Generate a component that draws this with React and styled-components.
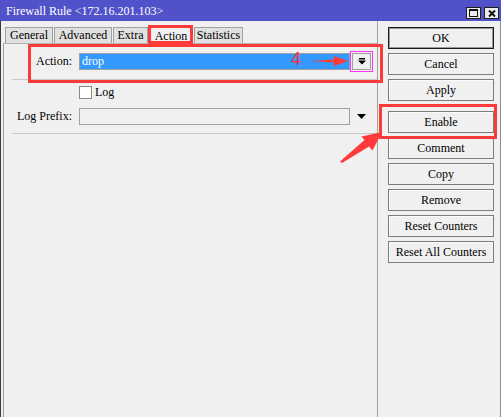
import React from 'react';
import styled, { createGlobalStyle } from 'styled-components';

const GlobalStyle = createGlobalStyle`
  html, body {
    margin: 0;
    padding: 0;
    background: #f0f0f0;
  }
  body {
    font-family: 'Liberation Serif', 'Times New Roman', serif;
    font-size: 12px;
    color: #000;
  }
`;

const Window = styled.div`
  position: relative;
  width: 501px;
  height: 417px;
  display: flex;
  flex-direction: column;
  background: #f0f0f0;
  overflow: hidden;
`;

const TitleBar = styled.div`
  height: 21px;
  flex-shrink: 0;
  display: flex;
  align-items: center;
  justify-content: space-between;
  padding: 0 2px 0 6px;
  background: #5151c9;
  color: #ffffff;
`;

const Title = styled.span`
  font-size: 12px;
  line-height: 1;
  margin-top: 1px;
`;

const WindowButtons = styled.div`
  display: flex;
  gap: 3px;
  margin-top: 5px;
`;

const WinButton = styled.div`
  width: 15px;
  height: 12px;
  box-sizing: border-box;
  border: 1px solid #1e1e1e;
  background: #ececec;
  display: flex;
  align-items: center;
  justify-content: center;
`;

const Body = styled.div`
  flex: 1;
  display: flex;
  border-left: 1px solid #3a3a3a;
  border-right: 1px solid #8c8c8c;
`;

const LeftPane = styled.div`
  width: 376px;
  display: flex;
  flex-direction: column;
  padding-left: 2px;
  box-sizing: border-box;
`;

const TabBar = styled.div`
  display: flex;
  align-items: flex-end;
  gap: 1px;
  margin: 5px 0 0 2px;
  height: 17px;
`;

const Tab = styled.div`
  width: ${p => p.w}px;
  height: ${p => (p.active ? 17 : 16)}px;
  box-sizing: border-box;
  display: flex;
  align-items: center;
  justify-content: center;
  border: 1px solid #a0a0a0;
  border-bottom: none;
  background: ${p => (p.active ? '#f0f0f0' : '#e1e1e1')};
  margin-bottom: ${p => (p.active ? -1 : 0)}px;
  position: relative;
  white-space: nowrap;
`;

const TabPanel = styled.div`
  flex: 1;
  border-left: 1px solid #a0a0a0;
  border-top: 1px solid #b4b4b4;
`;

const Section = styled.div`
  margin-left: 8px;
  padding: ${p => p.pad};
  border-bottom: 1px solid #c8c8c8;
  display: flex;
  flex-direction: column;
  gap: 9px;
`;

const Row = styled.div`
  display: flex;
  align-items: center;
  height: ${p => p.h || 17}px;
  margin-right: 6px;
`;

const Label = styled.div`
  width: 60px;
  margin-right: 7px;
  text-align: right;
  white-space: nowrap;
`;

const Field = styled.div`
  flex: 1;
  height: 17px;
  box-sizing: border-box;
  border: 1px solid #a0a0a0;
  background: ${p => (p.selected ? '#3399ff' : '#f0f0f0')};
  color: #fff;
  padding-left: 2px;
  display: flex;
  align-items: center;
`;

const DropButton = styled.div`
  width: 19px;
  height: 17px;
  margin-left: 2px;
  box-sizing: border-box;
  border: 1px solid #a0a0a0;
  background: #f0f0f0;
  display: flex;
  align-items: center;
  justify-content: center;
  outline: ${p => (p.marked ? '1.5px solid #ff33ff' : 'none')};
  outline-offset: 1px;
`;

const DropSlot = styled.div`
  width: 20px;
  margin-left: 1px;
  display: flex;
  justify-content: center;
`;

const CheckBox = styled.div`
  width: 13px;
  height: 13px;
  box-sizing: border-box;
  margin-left: 67px;
  border: 1px solid #8a8a8a;
  background: #ffffff;
`;

const CheckLabel = styled.span`
  margin-left: 3px;
`;

const RightPane = styled.div`
  flex: 1;
  border-left: 1px solid #a0a0a0;
  padding: 6px 0 0 10px;
  display: flex;
  flex-direction: column;
  gap: 4px;
`;

const Button = styled.div`
  width: 106px;
  height: 22px;
  box-sizing: border-box;
  margin-top: ${p => (p.spaced ? 6 : 0)}px;
  border: 1px solid ${p => (p.primary ? '#1a1a1a' : '#7c7c7c')};
  box-shadow: ${p => (p.primary ? 'inset 0 0 0 1px #9a9a9a' : 'inset 1px 1px 0 #fbfbfb')};
  background: #f0f0f0;
  display: flex;
  align-items: center;
  justify-content: center;
  white-space: nowrap;
`;

const Overlay = styled.div`
  position: absolute;
  inset: 0;
  pointer-events: none;
`;

const MarkBox = styled.div`
  position: absolute;
  box-sizing: border-box;
  border: 3px solid #fd3a3a;
`;

const StepNumber = styled.span`
  position: absolute;
  left: 291px;
  top: 50px;
  font-family: 'Liberation Sans', Arial, sans-serif;
  font-size: 18px;
  font-weight: 400;
  line-height: 1;
  color: #ff3030;
`;

const ArrowLayer = styled.svg`
  position: absolute;
  left: 0;
  top: 0;
`;

const MaximizeIcon = () => (
  <svg width="9" height="8" viewBox="0 0 9 8">
    <rect x="0.5" y="0.5" width="8" height="7" fill="none" stroke="#111" />
    <rect x="0" y="0" width="9" height="2" fill="#111" />
  </svg>
);

const CloseIcon = () => (
  <svg width="8" height="7" viewBox="0 0 8 7">
    <path d="M1 0.5 L7 6.5 M7 0.5 L1 6.5" stroke="#111" strokeWidth="2" />
  </svg>
);

const DropIcon = () => (
  <svg width="8" height="7" viewBox="0 0 8 7">
    <rect x="1" y="0" width="6" height="1.5" fill="#000" />
    <path d="M0 2.5 H8 L4 6.5 Z" fill="#000" />
  </svg>
);

const DownTriangle = () => (
  <svg width="9" height="5" viewBox="0 0 9 5">
    <path d="M0 0 H9 L4.5 5 Z" fill="#000" />
  </svg>
);

const actions = [
  { label: 'OK', primary: true },
  { label: 'Cancel' },
  { label: 'Apply' },
  { label: 'Enable', spaced: true },
  { label: 'Comment' },
  { label: 'Copy' },
  { label: 'Remove' },
  { label: 'Reset Counters' },
  { label: 'Reset All Counters' },
];

const tabs = [
  { label: 'General', w: 48 },
  { label: 'Advanced', w: 58 },
  { label: 'Extra', w: 35 },
  { label: 'Action', w: 44, active: true },
  { label: 'Statistics', w: 49 },
];

export default function App() {
  return (
    <>
      <GlobalStyle />
      <Window>
        <TitleBar>
          <Title>Firewall Rule &lt;172.16.201.103&gt;</Title>
          <WindowButtons>
            <WinButton><MaximizeIcon /></WinButton>
            <WinButton><CloseIcon /></WinButton>
          </WindowButtons>
        </TitleBar>
        <Body>
          <LeftPane>
            <TabBar>
              {tabs.map(t => (
                <Tab key={t.label} w={t.w} active={t.active}>{t.label}</Tab>
              ))}
            </TabBar>
            <TabPanel>
              <Section pad="9px 0 9px 0">
                <Row>
                  <Label>Action:</Label>
                  <Field selected>drop</Field>
                  <DropButton marked><DropIcon /></DropButton>
                </Row>
              </Section>
              <Section pad="6px 0 8px 0">
                <Row h={13}>
                  <CheckBox />
                  <CheckLabel>Log</CheckLabel>
                </Row>
                <Row>
                  <Label>Log Prefix:</Label>
                  <Field />
                  <DropSlot><DownTriangle /></DropSlot>
                </Row>
              </Section>
            </TabPanel>
          </LeftPane>
          <RightPane>
            {actions.map(a => (
              <Button key={a.label} primary={a.primary} spaced={a.spaced}>
                {a.label}
              </Button>
            ))}
          </RightPane>
        </Body>

        <Overlay>
          <MarkBox style={{ left: 148, top: 25, width: 45, height: 19 }} />
          <MarkBox style={{ left: 28, top: 44, width: 355, height: 39 }} />
          <MarkBox style={{ left: 379, top: 104, width: 118, height: 35 }} />
          <StepNumber>4</StepNumber>
          <ArrowLayer width="501" height="417" viewBox="0 0 501 417">
            {/* horizontal arrow to the drop-down button */}
            <path d="M310 61 L334 59.5 L334 56 L348 61 L334 66 L334 62.5 Z" fill="#ff3a3a" />
            {/* diagonal arrow to Enable */}
            <path
              d="M340 161.5 L364.5 140 L361.5 136.5 L382 132 L372.5 150.5 L369 146.5 L342 163 Z"
              fill="#ff3a3a"
            />
          </ArrowLayer>
        </Overlay>
      </Window>
    </>
  );
}
